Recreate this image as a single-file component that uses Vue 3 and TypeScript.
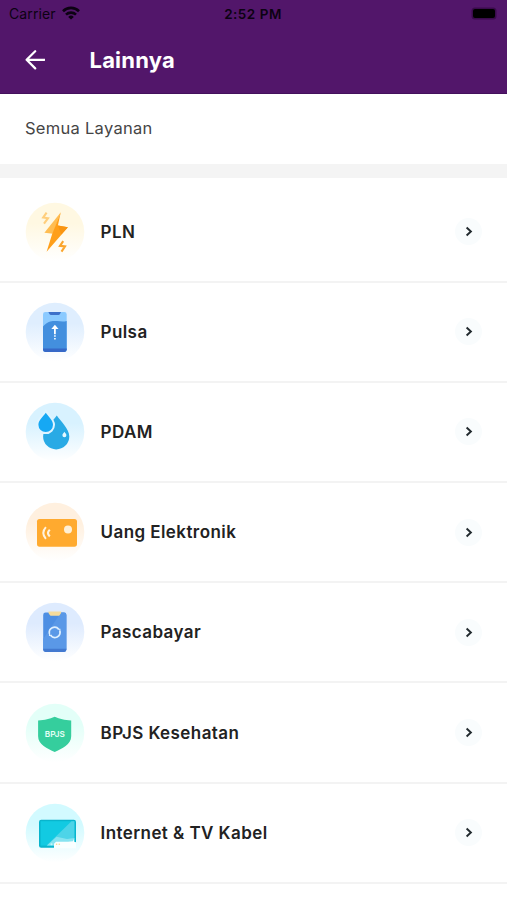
<script setup lang="ts">
type IconName = 'bolt' | 'phone' | 'water' | 'card' | 'bill' | 'shield' | 'tv'

interface Service {
  label: string
  icon: IconName
  tint: string
}

const services: Service[] = [
  { label: 'PLN', icon: 'bolt', tint: '#fff8e2' },
  { label: 'Pulsa', icon: 'phone', tint: '#dfeefe' },
  { label: 'PDAM', icon: 'water', tint: '#d8f2ff' },
  { label: 'Uang Elektronik', icon: 'card', tint: '#fff0df' },
  { label: 'Pascabayar', icon: 'bill', tint: '#deebfe' },
  { label: 'BPJS Kesehatan', icon: 'shield', tint: '#e3fff8' },
  { label: 'Internet & TV Kabel', icon: 'tv', tint: '#d2faff' },
]
</script>

<template>
  <div class="screen">
    <header class="top">
      <div class="status">
        <div class="carrier">
          <span>Carrier</span>
          <svg class="wifi" width="18" height="14" viewBox="0 0 18 14">
            <g fill="none" stroke="#0c0212" stroke-width="2.6">
              <path d="M1 5.2a11.4 11.4 0 0 1 16 0" />
              <path d="M4 8.6a7.2 7.2 0 0 1 10 0" />
            </g>
            <path d="M9 13.6 6.2 10.9a4 4 0 0 1 5.6 0z" fill="#0c0212" />
          </svg>
        </div>
        <span class="time">2:52 PM</span>
        <div class="battery-side"><span class="battery"></span></div>
      </div>
      <nav class="bar">
        <svg class="back" width="20" height="20" viewBox="0 0 20 20">
          <path d="M10.2 1.200 1.600 9.800l8.600 8.600M1.800 9.800h17.600" fill="none" stroke="#fff" stroke-width="2.200" stroke-linecap="round" stroke-linejoin="round" />
        </svg>
        <h1>Lainnya</h1>
      </nav>
    </header>

    <div class="section">Semua Layanan</div>

    <ul class="list">
      <li v-for="s in services" :key="s.label" class="row">
        <svg class="icon" width="60" height="60" viewBox="0 0 60 60">
          <defs>
            <linearGradient :id="'bg-' + s.icon" x1="0" y1="0" x2="0" y2="1">
              <stop offset="0" :stop-color="s.tint" />
              <stop offset="0.35" :stop-color="s.tint" />
              <stop offset="0.95" :stop-color="s.tint" stop-opacity="0.08" />
              <stop offset="1" :stop-color="s.tint" stop-opacity="0" />
            </linearGradient>
          </defs>
          <circle cx="30" cy="30" r="29.3" :fill="`url(#bg-${s.icon})`" />

          <g v-if="s.icon === 'bolt'">
            <path d="M35.800 10.200 19.400 30.800l8.600 1z" fill="#ffbd52" />
            <path d="M35.800 10.200 27 32.600l-5.400 17.200L42.900 25.200l-10-1.600z" fill="#ff9f1a" />
            <path d="m32.900 23.600 10 1.600-6.600 7.400z" fill="#f99512" />
            <path d="m21.600 10.600-3.400 4.900 4.800.7-4 5.400" fill="none" stroke="#ffce7c" stroke-width="2.100" />
            <path d="m38.200 39.200-3.200 4.600 5 .6-3.500 5.200" fill="none" stroke="#fba52c" stroke-width="2.100" />
          </g>

          <g v-else-if="s.icon === 'phone'">
            <rect x="18" y="10" width="23.700" height="40" rx="2.400" fill="#8bcaff" />
            <path d="M18 24.500c5-5.800 9.500-5.700 14-5.400 4 .3 7 .6 9.700-.2v28.700a2.400 2.400 0 0 1-2.400 2.400H20.400a2.400 2.400 0 0 1-2.400-2.400z" fill="#438fde" />
            <path d="M18 46.600h23.700v1a2.400 2.400 0 0 1-2.400 2.400H20.400a2.400 2.400 0 0 1-2.400-2.400z" fill="#3668c7" />
            <path d="M23.400 10h12.600l-1 2q-.5 1-1.600 1h-7.400q-1.100 0-1.600-1z" fill="#3d70c9" />
            <path d="m26.300 27 3.600-4.200 3.600 4.200z" fill="#fff" />
            <path d="M29.900 25v7.200" stroke="#fff" stroke-width="1.800" />
            <path d="M29.900 33.300v1.500M29.900 36v1.400" stroke="#e8f5ff" stroke-width="1.800" />
          </g>

          <g v-else-if="s.icon === 'water'">
            <path d="M31.800 13.600C35.500 19 44.300 27 44.300 34.500a13.100 12.900 0 0 1-26.200 0C18.100 27 26.500 21 31.800 13.600z" fill="#29aae5" />
            <path d="M20.800 10.800c2 3.300 7.200 7.200 7.200 12a7.300 7.300 0 0 1-14.600 0c0-4.800 5.400-8.700 7.400-12z" fill="#16a8f4" stroke="#dff4ff" stroke-width="4" paint-order="stroke" />
            <path d="M39.400 29.800c.8 1.300 2 2.200 2 3.500a2 2 0 0 1-4 0c0-1.300 1.200-2.200 2-3.500z" fill="#e6f8ff" />
          </g>

          <g v-else-if="s.icon === 'card'">
            <rect x="12" y="17" width="40" height="27.700" rx="2.600" fill="#ffaa2f" />
            <circle cx="43" cy="27.400" r="4" fill="#fff0d6" />
            <path d="M20.900 25.200q-5.200 5.900 0 11.600" fill="none" stroke="#fff3df" stroke-width="2" />
            <path d="M24.800 27.700q-3.700 3.400 0 6.700" fill="none" stroke="#fff3df" stroke-width="2.200" />
          </g>

          <g v-else-if="s.icon === 'bill'">
            <rect x="18.200" y="10.500" width="23.200" height="39.500" rx="2.400" fill="#4e8fe3" />
            <path d="M36 10.500h3a2.400 2.400 0 0 1 2.400 2.400v34H18.200v-10z" fill="#5a98e7" />
            <path d="M18.200 46.800h23.200v.8a2.400 2.400 0 0 1-2.400 2.400H20.600a2.400 2.400 0 0 1-2.400-2.400z" fill="#4279d0" />
            <path d="M23.500 9.600h12.600v1.300l-1.300 2q-.6.900-1.700.9h-6.600q-1.100 0-1.700-.9l-1.300-2z" fill="#f7dc9b" />
            <g fill="none" stroke="#deefff" stroke-width="1.600">
              <path d="M24.500 31.800a5.300 5.300 0 0 1 9.200-4.700M34.900 28.900a5.300 5.300 0 0 1-9.200 4.700" />
              <path d="M34.900 30.900v-3.600h-2.300M24.500 29.800v3.600h2.300" stroke-width="1.100" />
            </g>
          </g>

          <g v-else-if="s.icon === 'shield'">
            <path d="M29.700 13.700c5.300 2.400 9.600 3.300 16.500 3.800v15.700c0 8.400-9.300 12.200-16.500 15.800C22.500 45.400 13.100 41.600 13.100 33.200V17.500c7-.5 11.300-1.400 16.600-3.800z" fill="#35ce9d" />
            <text x="29.800" y="33.700" text-anchor="middle" class="badge-text">BPJS</text>
          </g>

          <g v-else>
            <rect x="14" y="16.700" width="37" height="28" rx="2.200" fill="#09b5cd" />
            <rect x="15.600" y="18.200" width="33.800" height="24.400" fill="#12cae2" />
            <path d="M46.500 18.200h2.900v24.400H21.600z" fill="#4dd4e8" />
            <path d="m22 42.600 9.500-8.800L42 36l7.400-1v7.600z" fill="#86e3f0" />
            <path d="M29 45.200v-4.500l2-2h12l5-.4 1-2.500v3l2 .5v5.900z" fill="#f9ffff" />
            <circle cx="26.500" cy="41.200" r="1" fill="#c8f6fa" />
            <circle cx="31.600" cy="41.300" r=".8" fill="#f6d98f" />
            <circle cx="34.300" cy="41.300" r=".8" fill="#f6d98f" />
          </g>
        </svg>
        <span class="label">{{ s.label }}</span>
        <span class="go">
          <svg width="8" height="11" viewBox="0 0 8 11">
            <path d="m1.600 1.500 4.300 4-4.300 4" fill="none" stroke="#222a2e" stroke-width="1.900" />
          </svg>
        </span>
      </li>
    </ul>
  </div>
</template>

<style>
body {
  margin: 0;
  background: #fff;
}
</style>

<style scoped>
.screen {
  width: 507px;
  height: 900px;
  overflow: hidden;
  background: #fff;
  color: #222;
  font-family: Inter, "Liberation Sans", sans-serif;
}

.top {
  box-sizing: border-box;
  height: 94px;
  background: #52166a;
  border-bottom: 1px solid #43105c;
}

.status {
  display: grid;
  grid-template-columns: 1fr auto 1fr;
  align-items: center;
  height: 27px;
  padding: 0 10px 0 9px;
  color: #0c0212;
  font-size: 14px;
}

.carrier {
  display: flex;
  align-items: center;
  gap: 6px;
  letter-spacing: 0.1px;
}

.wifi {
  margin-top: -2px;
}

.time {
  font-weight: 600;
  letter-spacing: 0.5px;
  font-size: 13.500px;
}

.battery-side {
  display: flex;
  justify-content: flex-end;
}

.battery {
  width: 22px;
  height: 9px;
  margin-right: 2px;
  border-radius: 2px;
  background: #000;
  box-shadow: 0 0 0 1.500px #3a0b4c;
}

.bar {
  display: flex;
  align-items: center;
  height: 66px;
  padding-left: 25px;
}

h1 {
  margin: 0 0 0 44.500px;
  color: #fff;
  font-size: 22px;
  font-weight: 700;
  line-height: 28px;
  letter-spacing: 0.2px;
}

.section {
  display: flex;
  align-items: center;
  box-sizing: border-box;
  height: 84px;
  padding: 0 25px 2px;
  border-bottom: 14px solid #f4f4f4;
  color: #454545;
  font-size: 16.500px;
  letter-spacing: 0.28px;
}

.list {
  margin: 0;
  padding: 4.500px 0 0;
  list-style: none;
}

.row {
  display: flex;
  align-items: center;
  box-sizing: border-box;
  height: 100.200px;
  padding: 0 25px;
  border-bottom: 2px solid #f3f3f3;
}

.icon {
  flex: none;
}

.label {
  flex: 1;
  margin-left: 15.500px;
  font-size: 17px;
  font-weight: 600;
  letter-spacing: 0.43px;
}

.go {
  display: grid;
  place-items: center;
  width: 27px;
  height: 27px;
  border-radius: 50%;
  background: #f9fcfd;
}

.badge-text {
  fill: #e5fff6;
  font-size: 8.200px;
  font-weight: 600;
}
</style>
